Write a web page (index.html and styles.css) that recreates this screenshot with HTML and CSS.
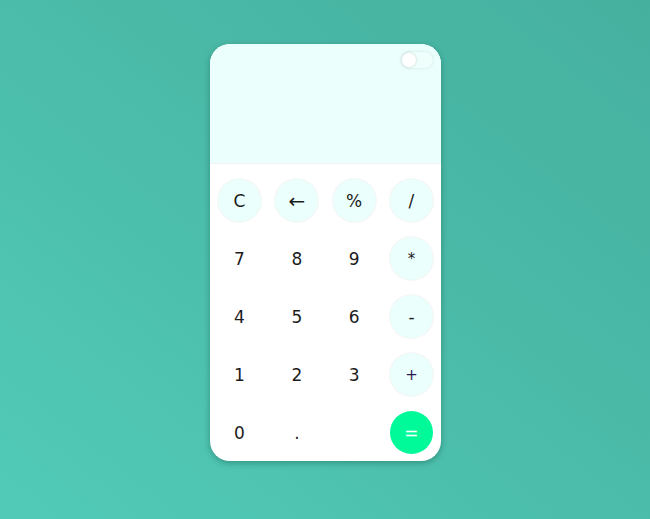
FILE: index.html
```html
<!DOCTYPE html>
<html>
<head>
<meta charset="utf-8">
<link rel="stylesheet" href="styles.css">
</head>
<body>
<div class="page">
  <div class="calc">
    <div class="display">
      <div class="toggle"><span class="knob"></span></div>
    </div>
    <div class="keys">
      <div class="key op">C</div>
      <div class="key op arrow">&larr;</div>
      <div class="key op">%</div>
      <div class="key op">/</div>
      <div class="key">7</div>
      <div class="key">8</div>
      <div class="key">9</div>
      <div class="key op small">*</div>
      <div class="key">4</div>
      <div class="key">5</div>
      <div class="key">6</div>
      <div class="key op">-</div>
      <div class="key">1</div>
      <div class="key">2</div>
      <div class="key">3</div>
      <div class="key op small plus">+</div>
      <div class="key">0</div>
      <div class="key">.</div>
      <div class="key empty"></div>
      <div class="key eq">=</div>
    </div>
  </div>
</div>
</body>
</html>
```

FILE: styles.css
```css
html, body {
  margin: 0;
  padding: 0;
  height: 100%;
}
body {
  background: linear-gradient(to top right, #51cbb8 0%, #4bbca9 50%, #46b09f 100%);
  font-family: "DejaVu Sans", Verdana, sans-serif;
}
.page {
  display: flex;
  justify-content: center;
  padding-top: 44px;
  padding-left: 1px;
}
.calc {
  width: 231px;
  background: #ffffff;
  border-radius: 20px;
  overflow: hidden;
  box-shadow: 0 2px 6px rgba(0, 60, 50, 0.35);
  display: flex;
  flex-direction: column;
}
.display {
  height: 120px;
  background: #ebfffc;
  border-bottom: 1px solid #eef3f2;
  display: flex;
  justify-content: flex-end;
  align-items: flex-start;
  padding: 8px 8px 0 0;
  box-sizing: border-box;
}
.toggle {
  width: 32px;
  height: 16px;
  border-radius: 8px;
  background: #eefffc;
  box-shadow: 0 0 3px rgba(0, 0, 0, 0.12);
  display: flex;
  align-items: center;
  padding-left: 1px;
  box-sizing: border-box;
}
.knob {
  width: 14px;
  height: 14px;
  border-radius: 50%;
  background: #ffffff;
  box-shadow: 0 0 3px rgba(0, 0, 0, 0.18);
}
.keys {
  display: grid;
  grid-template-columns: repeat(4, 43px);
  grid-auto-rows: 43px;
  justify-content: space-between;
  row-gap: 15px;
  padding: 15px 8px 7px 8px;
}
.key {
  width: 43px;
  height: 43px;
  border-radius: 50%;
  display: flex;
  align-items: center;
  justify-content: center;
  font-size: 17px;
  color: #1c1c1c;
}
.op {
  background: #ebfffc;
  box-shadow: 0 0 2px rgba(0, 0, 0, 0.12);
}
.small {
  font-size: 15px;
}
.plus {
  color: #2a1850;
}
.arrow {
  font-size: 20px;
}
.eq {
  background: #00fa9a;
  color: #ffffff;
}
```
